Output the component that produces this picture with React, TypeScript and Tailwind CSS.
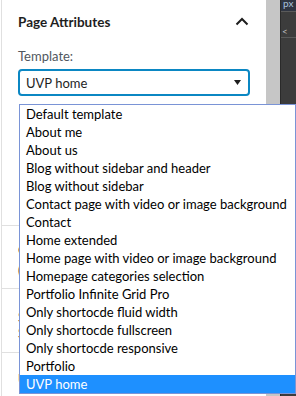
import React from "react";

const items = [
  "Default template",
  "About me",
  "About us",
  "Blog without sidebar and header",
  "Blog without sidebar",
  "Contact page with video or image background",
  "Contact",
  "Home extended",
  "Home page with video or image background",
  "Homepage categories selection",
  "Portfolio Infinite Grid Pro",
  "Only shortocde fluid width",
  "Only shortocde fullscreen",
  "Only shortocde responsive",
  "Portfolio",
  "UVP home",
];

function ChevronUp({ className = "" }: { className?: string }) {
  return (
    <svg width="14" height="9" viewBox="0 0 14 9" className={className}>
      <path d="M1.5 7.5 L7 2 L12.5 7.5" fill="none" stroke="#1e1e1e" strokeWidth="2" />
    </svg>
  );
}

export default function App() {
  return (
    <div
      className="relative w-[296px] h-[396px] overflow-hidden bg-white flex text-[13px]"
      style={{ fontFamily: 'Lato, "Noto Sans", sans-serif' }}
    >
      <div className="w-[1px] shrink-0 bg-white" />
      {/* panel */}
      <div className="w-[265px] shrink-0 border-l border-[#e0e0e0] flex flex-col">
        <div className="h-[48px] flex items-center justify-between pl-[16px] pr-[17px]">
          <span className="font-bold text-[13.5px] text-[#1e1e1e] leading-[18px]">Page Attributes</span>
          <ChevronUp className="mt-[-1px]" />
        </div>
        <div className="pl-[16px] mt-[4px] leading-[18px] text-[#50575e]">Template:</div>
        <div className="ml-[16px] mt-[4px] w-[232px] h-[29px] rounded-[4px] border-2 border-[#0b87c3] flex items-center justify-between pl-[6px] pr-[7px]">
          <span className="text-[#1e1e1e] leading-[18px] mt-[1px]">UVP home</span>
          <svg width="7" height="5" viewBox="0 0 7 5">
            <path d="M0 0 H7 L3.5 5 Z" fill="#1e1e1e" />
          </svg>
        </div>
        {/* content hidden behind dropdown */}
        <div className="mt-[129px] border-t border-[#e0e0e0] h-[69px] pl-[16px] pt-[14px] text-[#1e1e1e] leading-[20px]">
          <div>Order</div>
          <div>(Optional)</div>
        </div>
        <div className="border-t border-[#e0e0e0] h-[69px] pl-[16px] pt-[20px] text-[#1e1e1e] leading-[16px]">
          <div>Settings</div>
          <div>Status</div>
        </div>
        <div className="border-t border-[#e0e0e0] h-[48px] flex items-center justify-between pl-[16px] pr-[19px] pt-[8px]">
          <span className="font-bold text-[13.5px] text-[#1e1e1e] leading-[18px]">Ultimate Video Player</span>
          <ChevronUp />
        </div>
      </div>
      {/* scrollbar */}
      <div className="w-[14px] shrink-0 bg-[#c6c6c6]" />
      {/* dark side */}
      <div className="flex-1 bg-[#3c3c3c] border-l border-[#2a2a2a] flex flex-col">
        <div className="h-[11px] bg-[#2f3542] overflow-hidden text-[10px] leading-[6px] text-[#a9c3dc] pl-[2px]">px</div>
        <div className="h-[1px] bg-[#5a5a5a]" />
        <div className="h-[25px] flex items-end pl-[1px] text-[10px] leading-[12px] text-[#bbbbbb]">&lt;</div>
        <div className="h-[1px] bg-[#5a5a5a]" />
      </div>

      {/* dropdown list */}
      <div className="absolute left-[19px] top-[104px] w-[277px] border border-[#7a94d6] bg-white">
        {items.map((it) => {
          const sel = it === "UVP home";
          return (
            <div
              key={it}
              className={
                "h-[18px] leading-[18px] pl-[6px] whitespace-nowrap " +
                (sel ? "bg-[#1e90ff] text-white" : "text-[#000000]")
              }
            >
              {it}
            </div>
          );
        })}
      </div>
    </div>
  );
}
